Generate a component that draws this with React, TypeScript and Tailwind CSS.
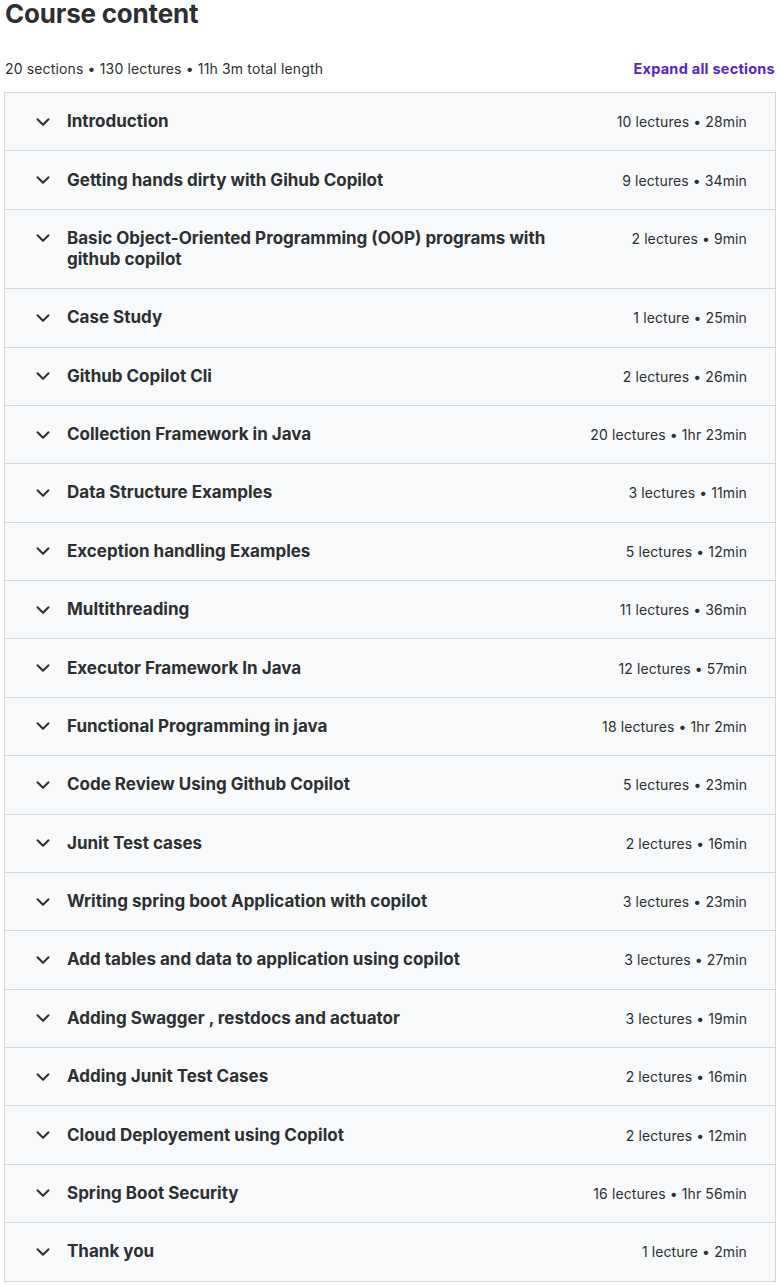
import React from "react";
import { ChevronDown } from "lucide-react";

type Section = { title: string; meta: string };

const sections: Section[] = [
  { title: "Introduction", meta: "10 lectures • 28min" },
  { title: "Getting hands dirty with Gihub Copilot", meta: "9 lectures • 34min" },
  { title: "Basic Object-Oriented Programming (OOP) programs with github copilot", meta: "2 lectures • 9min" },
  { title: "Case Study", meta: "1 lecture • 25min" },
  { title: "Github Copilot Cli", meta: "2 lectures • 26min" },
  { title: "Collection Framework in Java", meta: "20 lectures • 1hr 23min" },
  { title: "Data Structure Examples", meta: "3 lectures • 11min" },
  { title: "Exception handling Examples", meta: "5 lectures • 12min" },
  { title: "Multithreading", meta: "11 lectures • 36min" },
  { title: "Executor Framework In Java", meta: "12 lectures • 57min" },
  { title: "Functional Programming in java", meta: "18 lectures • 1hr 2min" },
  { title: "Code Review Using Github Copilot", meta: "5 lectures • 23min" },
  { title: "Junit Test cases", meta: "2 lectures • 16min" },
  { title: "Writing spring boot Application with copilot", meta: "3 lectures • 23min" },
  { title: "Add tables and data to application using copilot", meta: "3 lectures • 27min" },
  { title: "Adding Swagger , restdocs and actuator", meta: "3 lectures • 19min" },
  { title: "Adding Junit Test Cases", meta: "2 lectures • 16min" },
  { title: "Cloud Deployement using Copilot", meta: "2 lectures • 12min" },
  { title: "Spring Boot Security", meta: "16 lectures • 1hr 56min" },
  { title: "Thank you", meta: "1 lecture • 2min" },
];

export default function App() {
  return (
    <div
      className="w-[780px] bg-white pl-[4px] pr-[4px] text-[#2d2f31]"
      style={{ fontFamily: "Inter, 'Noto Sans', sans-serif" }}
    >
      <h2 className="pl-[1px] text-[26px] font-bold leading-[28px] tracking-[-0.2px]">Course content</h2>

      <div className="mt-[31px] flex items-center justify-between pl-[1px]">
        <span className="text-[14px] leading-[20px] tracking-[0.15px]">20 sections • 130 lectures • 11h 3m total length</span>
        <button className="mr-[1px] text-[14.5px] font-bold leading-[20px] tracking-[0.25px] text-[#5624d0]">
          Expand all sections
        </button>
      </div>

      <div className="mt-[13px] w-[772px] border border-[#d1d7dc]">
        {sections.map((s, i) => (
          <div
            key={s.title}
            className={`flex items-start bg-[#f7f9fa] py-[18.2px] pl-[26.5px] pr-[28px] ${i > 0 ? "border-t border-[#d1d7dc]" : ""}`}
          >
            <span className="flex h-[21px] w-[22px] shrink-0 items-center justify-center">
              <ChevronDown size={22} strokeWidth={2.2} className="text-[#2d2f31]" />
            </span>
            <div className="ml-[13.5px] flex-1 pr-[40px] text-[17px] font-bold leading-[21px]">{s.title}</div>
            <div className="shrink-0 text-[14px] leading-[21px] tracking-[0.1px]">{s.meta}</div>
          </div>
        ))}
      </div>
    </div>
  );
}
